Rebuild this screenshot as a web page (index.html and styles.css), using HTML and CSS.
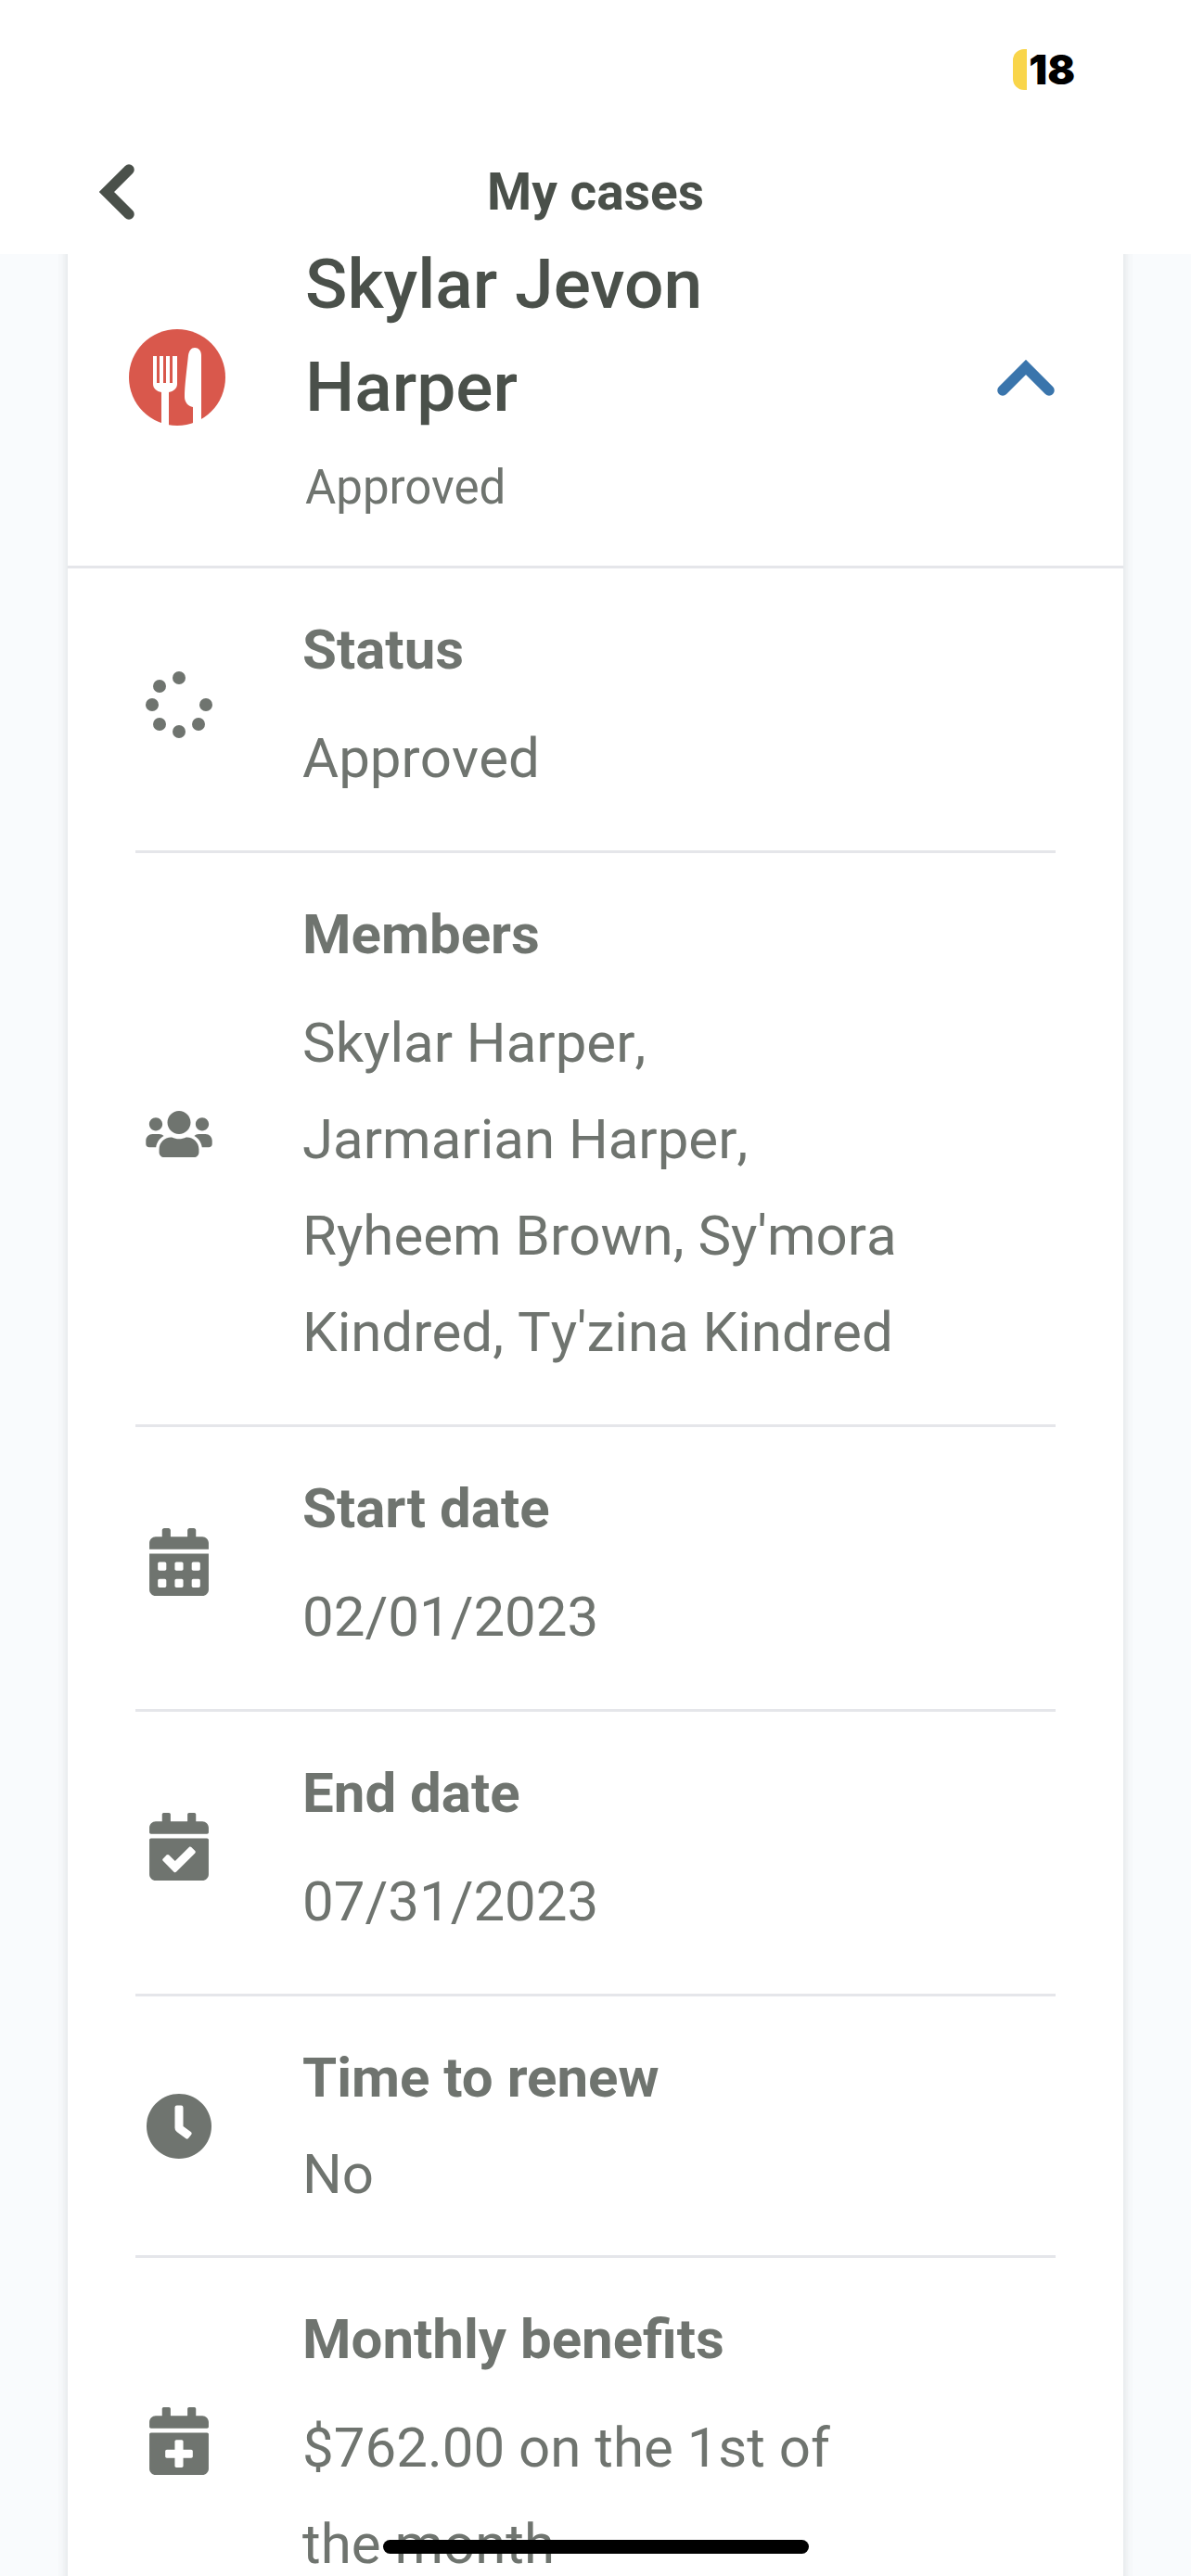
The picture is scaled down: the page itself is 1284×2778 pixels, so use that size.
FILE: index.html
```html
<!DOCTYPE html>
<html lang="en">
<head>
<meta charset="utf-8">
<title>My cases</title>
<link rel="stylesheet" href="styles.css">
</head>
<body>
<div class="screen">
  <header class="top">
    <div class="status">
      <span class="pill"></span>
      <span class="clock">18</span>
    </div>
    <div class="nav">
      <svg class="back" viewBox="0 0 39 62"><path d="M32 7 L8 31 L32 55"/></svg>
      <h1 class="title">My cases</h1>
    </div>
  </header>
  <main class="scroller">
    <section class="card">
      <div class="head">
        <svg class="badge" viewBox="0 0 104 104">
          <circle cx="52" cy="52" r="52" fill="#d9584c"/>
          <path fill="#fff" d="M26 29h4v29h3V29h4v29h3V29h4v29h3V29h5v30c0 5-4 8-9 9v36h-8V68c-5-1-9-4-9-9z"/>
          <path fill="#fff" d="M71 20c4 0 7 3 7 8v75h-9V84c-5-1-9-5-9-11 0-12 2-26 4-45 1-5 3-8 7-8z"/>
        </svg>
        <div class="who">
          <h2 class="name">Skylar Jevon Harper</h2>
          <p class="sub">Approved</p>
        </div>
        <svg class="toggle" viewBox="0 0 62 39"><path d="M6 33 L31 8 L56 33"/></svg>
      </div>
      <div class="rows">
        <div class="row">
          <div class="ic">
            <svg class="ico-spin" viewBox="0 0 72 72"><circle cx="36" cy="7" r="7"/><circle cx="15" cy="16" r="7"/><circle cx="7" cy="36" r="7"/><circle cx="15" cy="57" r="7"/><circle cx="36" cy="65" r="7"/><circle cx="57" cy="57" r="7"/><circle cx="65" cy="36" r="7"/></svg>
          </div>
          <div class="txt"><div class="label">Status</div><div class="value">Approved</div></div>
        </div>
        <div class="row">
          <div class="ic">
            <svg class="ico-users" viewBox="0 32 640 448"><path d="M96 224c35.3 0 64-28.7 64-64s-28.7-64-64-64-64 28.7-64 64 28.7 64 64 64zm448 0c35.3 0 64-28.7 64-64s-28.7-64-64-64-64 28.7-64 64 28.7 64 64 64zm32 32h-64c-17.6 0-33.5 7.1-45.1 18.6 40.3 22.1 68.9 62 75.1 109.4h66c17.7 0 32-14.3 32-32v-32c0-35.3-28.7-64-64-64zm-256 0c61.9 0 112-50.1 112-112S381.9 32 320 32 208 82.1 208 144s50.1 112 112 112zm76.8 32h-8.3c-20.8 10-43.9 16-68.5 16s-47.6-6-68.5-16h-8.3C179.6 288 128 339.6 128 403.2V432c0 26.5 21.5 48 48 48h288c26.5 0 48-21.5 48-48v-28.8c0-63.6-51.6-115.2-115.2-115.2zm-223.7-13.4C161.5 263.1 145.6 256 128 256H64c-35.3 0-64 28.7-64 64v32c0 17.7 14.3 32 32 32h65.9c6.3-47.4 34.9-87.3 75.2-109.4z"/></svg>
          </div>
          <div class="txt"><div class="label">Members</div><div class="value">Skylar Harper, Jarmarian Harper, Ryheem Brown, Sy'mora Kindred, Ty'zina Kindred</div></div>
        </div>
        <div class="row">
          <div class="ic">
            <svg class="ico-cal" viewBox="0 0 448 512"><path d="M0 464c0 26.5 21.5 48 48 48h352c26.5 0 48-21.5 48-48V192H0v272zm320-196c0-6.6 5.4-12 12-12h40c6.6 0 12 5.4 12 12v40c0 6.6-5.4 12-12 12h-40c-6.6 0-12-5.4-12-12v-40zm0 128c0-6.6 5.4-12 12-12h40c6.6 0 12 5.4 12 12v40c0 6.6-5.4 12-12 12h-40c-6.6 0-12-5.4-12-12v-40zM192 268c0-6.6 5.4-12 12-12h40c6.6 0 12 5.4 12 12v40c0 6.6-5.4 12-12 12h-40c-6.6 0-12-5.4-12-12v-40zm0 128c0-6.6 5.4-12 12-12h40c6.6 0 12 5.4 12 12v40c0 6.6-5.4 12-12 12h-40c-6.6 0-12-5.4-12-12v-40zM64 268c0-6.6 5.4-12 12-12h40c6.6 0 12 5.4 12 12v40c0 6.6-5.4 12-12 12H76c-6.6 0-12-5.4-12-12v-40zm0 128c0-6.6 5.4-12 12-12h40c6.6 0 12 5.4 12 12v40c0 6.6-5.4 12-12 12H76c-6.6 0-12-5.4-12-12v-40zM400 64h-48V16c0-8.8-7.2-16-16-16h-32c-8.8 0-16 7.2-16 16v48H160V16c0-8.8-7.2-16-16-16h-32c-8.8 0-16 7.2-16 16v48H48C21.5 64 0 85.5 0 112v48h448v-48c0-26.5-21.5-48-48-48z"/></svg>
          </div>
          <div class="txt"><div class="label">Start date</div><div class="value">02/01/2023</div></div>
        </div>
        <div class="row">
          <div class="ic">
            <svg class="ico-cal" viewBox="0 0 448 512"><path d="M436 160H12c-6.627 0-12-5.373-12-12v-36c0-26.51 21.49-48 48-48h48V12c0-6.627 5.373-12 12-12h40c6.627 0 12 5.373 12 12v52h128V12c0-6.627 5.373-12 12-12h40c6.627 0 12 5.373 12 12v52h48c26.51 0 48 21.49 48 48v36c0 6.627-5.373 12-12 12zM12 192h424c6.627 0 12 5.373 12 12v260c0 26.51-21.49 48-48 48H48c-26.51 0-48-21.49-48-48V204c0-6.627 5.373-12 12-12zm333.296 95.947l-28.169-28.398c-4.667-4.705-12.265-4.736-16.97-.068L194.12 364.665l-45.98-46.352c-4.667-4.705-12.266-4.736-16.971-.068l-28.397 28.17c-4.705 4.667-4.736 12.265-.068 16.97l82.601 83.269c4.667 4.705 12.265 4.736 16.97.068l142.953-141.805c4.705-4.667 4.736-12.265.068-16.97z"/></svg>
          </div>
          <div class="txt"><div class="label">End date</div><div class="value">07/31/2023</div></div>
        </div>
        <div class="row row-compact">
          <div class="ic">
            <svg class="ico-clock" viewBox="8 8 496 496"><path d="M256,8C119,8,8,119,8,256S119,504,256,504,504,393,504,256,393,8,256,8Zm92.49,313h0l-20,25a16,16,0,0,1-22.49,2.5h0l-67-49.72a40,40,0,0,1-15-31.23V112a16,16,0,0,1,16-16h32a16,16,0,0,1,16,16V256l58,42.5A16,16,0,0,1,348.49,321Z"/></svg>
          </div>
          <div class="txt"><div class="label">Time to renew</div><div class="value">No</div></div>
        </div>
        <div class="row">
          <div class="ic">
            <svg class="ico-cal" viewBox="0 0 448 512"><path d="M436 160H12c-6.6 0-12-5.4-12-12v-36c0-26.5 21.5-48 48-48h48V12c0-6.6 5.4-12 12-12h40c6.6 0 12 5.4 12 12v52h128V12c0-6.6 5.4-12 12-12h40c6.6 0 12 5.4 12 12v52h48c26.5 0 48 21.5 48 48v36c0 6.6-5.4 12-12 12zM12 192h424c6.6 0 12 5.4 12 12v260c0 26.5-21.5 48-48 48H48c-26.5 0-48-21.5-48-48V204c0-6.6 5.4-12 12-12zm316 140c0-6.6-5.4-12-12-12h-60v-60c0-6.6-5.4-12-12-12h-40c-6.6 0-12 5.4-12 12v60h-60c-6.6 0-12 5.4-12 12v40c0 6.6 5.4 12 12 12h60v60c0 6.6 5.4 12 12 12h40c6.6 0 12-5.4 12-12v-60h60c6.6 0 12-5.4 12-12v-40z"/></svg>
          </div>
          <div class="txt"><div class="label">Monthly benefits</div><div class="value">$762.00 on the 1st of the month</div></div>
        </div>
      </div>
    </section>
  </main>
  <div class="home-bar"></div>
</div>
</body>
</html>
```
FILE: styles.css
```css
* { box-sizing: border-box; }
html, body { margin: 0; padding: 0; }
body { width: 1284px; height: 2778px; overflow: hidden; font-family: Roboto, "Liberation Sans", sans-serif; background: #f9fbfd; }
.screen { position: relative; width: 1284px; height: 2778px; overflow: hidden; display: flex; flex-direction: column; }
.top { position: relative; z-index: 2; flex: none; height: 274px; background: #fff; }
.status { display: flex; justify-content: flex-end; align-items: center; gap: 2px; height: 150px; padding-right: 125px; }
.pill { width: 15px; height: 44px; background: #f9d54a; border-radius: 12px 0 0 12px; }
.clock { font-family: Inter, sans-serif; font-weight: 900; font-size: 44px; line-height: 44px; color: #000; }
.nav { position: absolute; left: 0; right: 0; top: 176px; height: 62px; display: flex; align-items: center; justify-content: center; }
.back { position: absolute; left: 107px; top: 0; width: 39px; height: 62px; fill: none; stroke: #4a504a; stroke-width: 11.5; stroke-linecap: round; stroke-linejoin: miter; }
.title { margin: 0; font-size: 55px; font-weight: 700; line-height: 62px; color: #4a504a; }
.scroller { flex: 1; min-height: 0; overflow: hidden; padding-top: 1px; }
.card { margin: -74px 73px 0; background: #fff; box-shadow: 0 0 11px rgba(60, 70, 70, .18); }
.head { display: flex; align-items: center; padding: 50px 74px 54px 66px; border-bottom: 3px solid #e5e6ea; }
.badge { flex: none; width: 104px; height: 104px; margin: 7px 86px 0 0; }
.who { flex: 1; min-width: 0; }
.name { margin: 0; font-size: 75px; font-weight: 500; line-height: 111px; color: #4a504a; width: 560px; }
.sub { margin: 23px 0 0; font-size: 51px; line-height: 60px; color: #6f746f; }
.toggle { flex: none; width: 62px; height: 39px; margin-top: 8px; fill: none; stroke: #3a75ac; stroke-width: 11.5; stroke-linecap: round; stroke-linejoin: miter; }
.rows { padding: 0 73px; }
.row { display: flex; align-items: center; padding: 36px 0 35px; border-bottom: 3px solid #e5e6ea; }
.ic { flex: none; width: 94px; margin-right: 86px; padding-bottom: 11px; display: flex; justify-content: center; }
.ic svg { display: block; fill: #6f746f; }
.ico-spin { width: 72px; height: 72px; }
.ico-users { width: 72px; height: 50px; }
.ic .ico-cal { width: 64px; height: 73px; margin-bottom: 4px; }
.ico-clock { width: 70px; height: 70px; }
.txt { flex: 1; min-width: 0; padding-right: 162px; }
.label { font-size: 60px; font-weight: 700; line-height: 104px; color: #6f746f; }
.value { margin: 13px 0 12px; font-size: 60px; line-height: 104px; color: #6f746f; font-kerning: none; }
.row-compact .value { margin: 0; }
.row-compact .ic { padding-bottom: 0; }
.home-bar { position: absolute; left: 413px; top: 2739px; width: 459px; height: 15px; border-radius: 8px; background: #000; }
```
